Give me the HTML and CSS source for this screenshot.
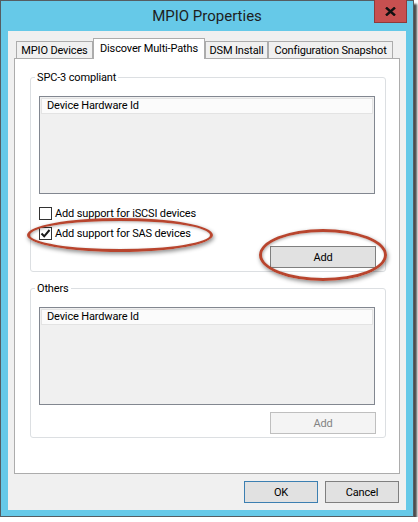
FILE: index.html
```html
<!DOCTYPE html>
<html>
<head>
<meta charset="utf-8">
<title>MPIO Properties</title>
<link rel="stylesheet" href="styles.css">
</head>
<body>
<div class="window">
  <div class="titlebar">
    <span class="tb-spacer"></span>
    <span class="title">MPIO Properties</span>
    <span class="tb-right">
      <span class="close">
        <svg width="11" height="9" viewBox="0 0 11 9"><path d="M1 0.5 L10 8.5 M10 0.5 L1 8.5" stroke="#111" stroke-width="2.4" fill="none"/></svg>
      </span>
    </span>
  </div>
  <div class="client">
    <div class="tabs">
      <div class="tab t1">MPIO Devices</div>
      <div class="tab t2 active">Discover Multi-Paths</div>
      <div class="tab t3">DSM Install</div>
      <div class="tab t4">Configuration Snapshot</div>
    </div>
    <div class="panel">
      <div class="group">
        <div class="legend">SPC-3 compliant</div>
        <div class="list"><div class="list-head">Device Hardware Id</div></div>
        <div class="check first"><span class="box"></span><span class="check-label">Add support for iSCSI devices</span></div>
        <div class="check"><span class="box"><svg width="11" height="11" viewBox="0 0 11 11"><path d="M1.5 5.5 L4.2 8.3 L9.5 2" stroke="#1a1a1a" stroke-width="2" fill="none"/></svg></span><span class="check-label">Add support for SAS devices</span></div>
        <div class="btn-row first-add"><span class="btn add">Add</span></div>
      </div>
      <div class="group second">
        <div class="legend">Others</div>
        <div class="list"><div class="list-head">Device Hardware Id</div></div>
        <div class="btn-row second-add"><span class="btn add disabled">Add</span></div>
      </div>
    </div>
    <div class="footer">
      <span class="btn dlg ok">OK</span>
      <span class="btn dlg">Cancel</span>
    </div>
  </div>
  <div class="mark mark-sas"></div>
  <div class="mark mark-add"></div>
</div>
</body>
</html>
```
FILE: styles.css
```css
html, body {
  margin: 0;
  padding: 0;
  background: #ffffff;
}
body {
  font-family: Roboto, "Noto Sans", sans-serif;
  font-size: 11px;
  letter-spacing: -0.15px;
  color: #000;
}
.window {
  position: relative;
  box-sizing: border-box;
  width: 414px;
  height: 517px;
  border: 1px solid #555d62;
  background: #66c9e8;
  padding: 0 7px 6px 7px;
  display: flex;
  flex-direction: column;
  box-shadow: 3px 4px 2px rgba(0, 0, 0, 0.7);
}
.titlebar {
  height: 30px;
  display: grid;
  grid-template-columns: 1fr auto 1fr;
  align-items: center;
}
.title {
  font-size: 15px;
  letter-spacing: 0;
  color: #1e1e1e;
  line-height: 30px;
}
.tb-right {
  align-self: start;
  justify-self: end;
  margin-right: -1px;
  margin-top: -1px;
}
.close {
  box-sizing: border-box;
  width: 33px;
  height: 23px;
  display: flex;
  align-items: center;
  justify-content: center;
  background: #c75050;
  border: 1px solid #8f3a3a;
  border-top: none;
}
.client {
  flex: 1;
  background: #f0f0f0;
  padding: 7px 6px 0 6px;
  display: flex;
  flex-direction: column;
}
.tabs {
  display: flex;
  align-items: flex-end;
  height: 20px;
  padding-left: 2px;
  position: relative;
  z-index: 1;
}
.tab {
  box-sizing: border-box;
  height: 17px;
  border: 1px solid #acacac;
  border-bottom: none;
  background: #f0f0f0;
  display: flex;
  align-items: center;
  justify-content: center;
  white-space: nowrap;
}
.tab.active {
  height: 21px;
  margin-bottom: -1px;
  background: #ffffff;
  padding-bottom: 1px;
}
.t1 { width: 77px; }
.t2 { width: 112px; }
.t3 { width: 63px; }
.t4 { width: 125px; }
.panel {
  box-sizing: border-box;
  height: 416px;
  border: 1px solid #acacac;
  background: #fff;
  padding: 18px 13px 0 15px;
}
.group {
  border: 1px solid #dcdfe2;
  border-radius: 3px;
  padding: 0 10px 3px 8px;
}
.group.second {
  margin-top: 16px;
}
.legend {
  width: fit-content;
  margin: -8px 0 0 -4px;
  padding: 0 2px;
  line-height: 15px;
  background: #fff;
}
.list {
  box-sizing: border-box;
  height: 98px;
  margin-top: 11px;
  border: 1px solid #828790;
  background: #f0f0f0;
  padding: 1px;
}
.list-head {
  box-sizing: border-box;
  height: 16px;
  border: 1px solid #e3e3e3;
  background: #fbfbfb;
  padding-left: 5px;
  line-height: 14px;
  color: #000;
}
.check {
  height: 20px;
  display: flex;
  align-items: center;
  gap: 3px;
}
.check.first {
  margin-top: 9px;
}
.box {
  box-sizing: border-box;
  width: 13px;
  height: 13px;
  border: 1px solid #333;
  background: #fff;
  display: flex;
  align-items: center;
  justify-content: center;
}
.btn-row {
  display: flex;
  justify-content: flex-end;
  margin-right: -1px;
}
.first-add { margin-top: 3px; }
.second-add { margin-top: 7px; }
.btn {
  box-sizing: border-box;
  height: 22px;
  border: 1px solid #7f7f7f;
  background: #e1e1e1;
  display: flex;
  align-items: center;
  justify-content: center;
}
.btn.add { width: 106px; }
.btn.disabled {
  background: #f4f4f4;
  border-color: #bfbfbf;
  color: #838383;
}
.footer {
  display: flex;
  justify-content: flex-end;
  gap: 7px;
  margin-top: 7px;
  padding-right: 1px;
}
.btn.dlg { width: 74px; }
.btn.ok { border-color: #3c7fb1; }
.mark {
  position: absolute;
  box-sizing: border-box;
  border: 3px solid #b8452e;
  border-radius: 50%;
  box-shadow: 1px 2px 4px rgba(0, 0, 0, 0.45), inset 1px 1px 3px rgba(0, 0, 0, 0.3);
}
.mark-sas {
  left: 26px;
  top: 217px;
  width: 186px;
  height: 34px;
}
.mark-add {
  left: 258px;
  top: 228px;
  width: 128px;
  height: 52px;
}
```
